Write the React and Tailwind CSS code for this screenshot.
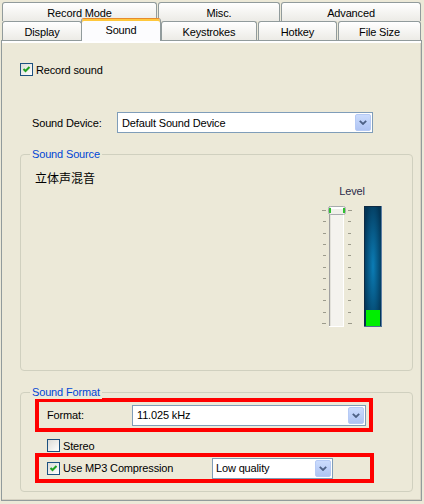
import React from "react";

const FONT = "[font-family:'Liberation_Sans',Arial,sans-serif]";

function Check({ checked }) {
  return (
    <div className="w-[13px] h-[13px] shrink-0 border border-[#1C5180] bg-gradient-to-br from-[#DCDCD7] to-white flex items-center justify-center">
      {checked && (
        <svg width="11" height="11" viewBox="0 0 11 11">
          <path d="M2.5 5 L4.5 7 L8.5 3" stroke="#21A121" strokeWidth="2" fill="none" />
        </svg>
      )}
    </div>
  );
}

function DropBtn() {
  return (
    <div className="w-[16px] h-[17px] shrink-0 rounded-[2px] border border-[#B6CAF5] bg-gradient-to-b from-[#CBDCFD] to-[#AFC4F3] flex items-center justify-center">
      <svg width="8" height="5" viewBox="0 0 8 5">
        <path d="M0.8 0.8 L4 4 L7.2 0.8" stroke="#4D6185" strokeWidth="1.8" fill="none" />
      </svg>
    </div>
  );
}

function Combo({ w, text, pl = "pl-[4px]" }) {
  return (
    <div className={`${w} h-[21px] shrink-0 border border-[#7F9DB9] bg-white flex items-center justify-between ${pl} pr-[1px]`}>
      <span className="leading-[13px] pt-[1px] text-black whitespace-nowrap">{text}</span>
      <DropBtn />
    </div>
  );
}

function Group({ label, h, children }) {
  return (
    <div className={`relative ml-[18px] w-[393px] ${h} border border-[#D0D0BF] rounded-[4px]`}>
      <span className="absolute left-[9px] -top-[7px] px-[2px] bg-[#ECE9D8] text-[#0046D5] leading-[13px] whitespace-nowrap">
        {label}
      </span>
      {children}
    </div>
  );
}

function Slider() {
  const ys = [4, 15, 27, 38, 49, 61, 72, 83, 94, 106, 117];
  return (
    <svg width="30" height="121" viewBox="0 0 30 121">
      {ys.map((y, i) => {
        const end = i === 0 || i === ys.length - 1;
        return (
          <g key={i} fill="#9C9B8C">
            <rect x={end ? 0 : 1} y={y} width={end ? 4 : 3} height="1" />
            <rect x="26" y={y} width={end ? 4 : 3} height="1" />
          </g>
        );
      })}
      <rect x="7" y="0" width="15" height="121" fill="#F4F3EE" />
      <rect x="7" y="0" width="1" height="121" fill="#A0A0A0" />
      <rect x="8" y="0" width="1" height="120" fill="#E2E1DA" />
      <rect x="21" y="0" width="1" height="121" fill="#FFFFFF" />
      <rect x="7" y="120" width="15" height="1" fill="#FFFFFF" />
      <rect x="6.5" y="0.5" width="17" height="8" rx="2" fill="#F0F0EA" stroke="#A7ABAD" />
      <rect x="7" y="2" width="2" height="5" fill="#2FC12F" />
      <rect x="21" y="2" width="2" height="5" fill="#2FC12F" />
      <rect x="9" y="1" width="12" height="2" fill="#FFFFFF" />
    </svg>
  );
}

function Meter() {
  return (
    <svg width="18" height="121" viewBox="0 0 18 121">
      <defs>
        <radialGradient id="mg" cx="50%" cy="50%" r="60%">
          <stop offset="0%" stopColor="#0B7DB6" />
          <stop offset="100%" stopColor="#033657" />
        </radialGradient>
      </defs>
      <rect x="0" y="0" width="18" height="121" fill="#0E2B44" />
      <rect x="17" y="0" width="1" height="121" fill="#5B7DA3" />
      <rect x="0" y="120" width="18" height="1" fill="#4F6E92" />
      <rect x="1" y="1" width="16" height="119" fill="url(#mg)" />
      <rect x="2" y="104" width="14" height="16" fill="#00EE00" />
    </svg>
  );
}

const tab =
  "h-full flex items-center justify-center border border-b-0 border-[#919B9C] rounded-t-[3px] bg-gradient-to-b from-white to-[#ECEBE6] text-black leading-[13px] whitespace-nowrap";

export default function App() {
  return (
    <div className={`w-[424px] h-[504px] overflow-hidden bg-[#ECE9D8] text-[11px] tracking-[-0.15px] text-black ${FONT}`}>
      {/* Tab row 1 */}
      <div className="flex ml-[2px] mt-[2px] h-[19px] gap-[1px]">
        <div className={`${tab} w-[155px] pt-[2px]`}>Record Mode</div>
        <div className={`${tab} w-[122px] pt-[2px]`}>Misc.</div>
        <div className={`${tab} w-[140px] pt-[2px]`}>Advanced</div>
      </div>
      {/* Tab row 2 */}
      <div className="flex ml-[2px] h-[19px] items-end">
        <div className={`${tab} w-[80px] pt-[2px]`}>Display</div>
        <div className="relative z-10 -ml-[1px] -mb-[1px] w-[80px] h-[23px] flex items-center justify-center border border-b-0 border-[#919B9C] border-t-[#E68B2C] rounded-t-[3px] bg-[#FCFCFE] shadow-[inset_0_2px_0_#FFC83C] text-black leading-[13px]">
          Sound
        </div>
        <div className={`${tab} w-[96px] pt-[2px]`}>Keystrokes</div>
        <div className={`${tab} w-[79px] ml-[1px] pt-[2px]`}>Hotkey</div>
        <div className={`${tab} w-[83px] ml-[1px] pt-[2px]`}>File Size</div>
      </div>

      {/* Panel */}
      <div className="ml-[1px] w-[421px] h-[461px] border border-[#919B9C] shadow-[inset_0_2px_0_#FFFFFF,inset_-1px_-1px_0_#D6D2C2] bg-[#ECE9D8] flex flex-col">
        {/* Record sound */}
        <div className="mt-[22px] ml-[18px] h-[13px] flex items-center">
          <Check checked />
          <span className="ml-[3px] leading-[13px] pt-[1px]">Record sound</span>
        </div>

        {/* Sound device */}
        <div className="mt-[36px] ml-[30px] flex items-center">
          <span className="w-[85px] leading-[13px] pt-[1px]">Sound Device:</span>
          <Combo w="w-[256px]" text="Default Sound Device" />
        </div>

        {/* Sound Source */}
        <div className="mt-[21px]">
          <Group label="Sound Source" h="h-[217px]">
            <div className="flex justify-between items-start">
              <span className="mt-[15px] ml-[14px] text-[12px] leading-[16px] tracking-normal [font-family:'Noto_Sans_CJK_SC',sans-serif]">
                立体声混音
              </span>
              <div className="mt-[30px] mr-[30px] flex flex-col items-center">
                <span className="leading-[13px] text-[#2B2B4A]">Level</span>
                <div className="mt-[8px] flex items-start gap-[12px]">
                  <Slider />
                  <Meter />
                </div>
              </div>
            </div>
          </Group>
        </div>

        {/* Sound Format */}
        <div className="mt-[21px]">
          <Group label="Sound Format" h="h-[100px]">
            <div className="flex flex-col">
              <div className="mt-[5px] ml-[14px] w-[338px] h-[34px] border-[4px] border-[#FF0000] flex items-center pl-[8px]">
                <span className="w-[85px] leading-[13px] pt-[1px]">Format:</span>
                <Combo w="w-[234px]" text="11.025 kHz" />
              </div>
              <div className="mt-[7px] ml-[26px] h-[13px] flex items-center">
                <Check />
                <span className="ml-[3px] leading-[13px] pt-[1px]">Stereo</span>
              </div>
              <div className="mt-[1px] ml-[14px] w-[339px] h-[30px] border-[4px] border-[#FF0000] flex items-center pl-[8px]">
                <div className="w-[165px] flex items-center">
                  <Check checked />
                  <span className="ml-[3px] leading-[13px] pt-[1px] whitespace-nowrap">Use MP3 Compression</span>
                </div>
                <Combo w="w-[121px]" text="Low quality" pl="pl-[3px]" />
              </div>
            </div>
          </Group>
        </div>
      </div>
    </div>
  );
}
